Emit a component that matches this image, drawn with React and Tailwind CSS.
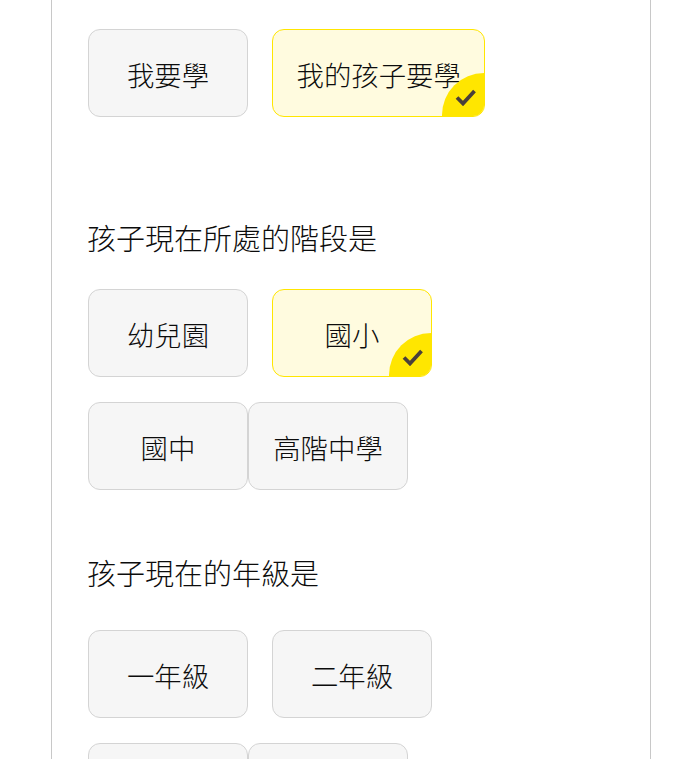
function Option({ label, selected, className = '' }) {
  return (
    <div
      className={`relative flex h-[88px] min-w-[160px] items-center justify-center overflow-hidden rounded-[12px] border px-[23.5px] pt-[4px] text-[27.4px] font-light text-[#0c0c0c] ${
        selected ? 'border-[#ffe600] bg-[#fffbdf]' : 'border-[#d4d4d4] bg-[#f6f6f6]'
      } ${className}`}
    >
      {label}
      {selected ? (
        <span className="absolute right-0 bottom-0 flex h-[43px] w-[42.5px] items-center justify-center rounded-tl-[43px] bg-[#ffe600] pt-[5px] pl-[5px]">
          <svg width="21" height="18" viewBox="0 0 21 18" fill="none">
            <path d="M2 9.5 L8 15.5 L19.5 3" stroke="#4a3f3a" strokeWidth="3.8" />
          </svg>
        </span>
      ) : null}
    </div>
  );
}

export default function App() {
  return (
    <div className="h-[759px] overflow-hidden bg-white font-['Noto_Sans_CJK_TC',sans-serif]">
      <div className="mx-[51px] h-[759px] w-[600px] border-x border-[#c8c8c8] px-9 pt-[29px]">
        <div className="flex gap-6">
          <Option label="我要學" />
          <Option label="我的孩子要學" selected />
        </div>

        <h2 className="mt-[99px] -ml-px text-[29px] leading-[42px] font-light text-[#0c0c0c]">孩子現在所處的階段是</h2>
        <div className="mt-[31px] flex gap-6">
          <Option label="幼兒園" />
          <Option label="國小" selected />
        </div>
        <div className="mt-[25px] flex">
          <Option label="國中" />
          <Option label="高階中學" />
        </div>

        <h2 className="mt-[61px] -ml-px text-[29px] leading-[42px] font-light text-[#0c0c0c]">孩子現在的年級是</h2>
        <div className="mt-[37px] flex gap-6">
          <Option label="一年級" />
          <Option label="二年級" />
        </div>
        <div className="mt-[25px] flex">
          <Option label="三年級" />
          <Option label="四年級" />
        </div>
      </div>
    </div>
  );
}
